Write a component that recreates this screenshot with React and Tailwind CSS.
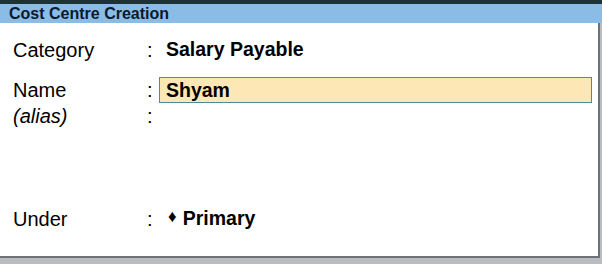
export default function App() {
  const rows = "flex items-center h-[26px]"
  return (
    <div className="w-[602px] h-[264px] bg-[#b9bdc1] font-['Liberation_Sans',Arial,sans-serif] text-black overflow-hidden">
      <div className="h-[4px] bg-[#1e3236]" />
      <div className="h-[19px] bg-[#8bbce5] pl-[9px] text-[16px] font-bold leading-[19px] text-[#0b1a2a]">
        Cost Centre Creation
      </div>
      <div className="w-[600px] h-[235px] bg-white border-r-2 border-b-2 border-[#6f7275] pl-[13px] pt-[14px] text-[20px]">
        <div className={rows}>
          <span className="w-[134px]">Category</span>
          <span className="w-[19px]">:</span>
          <span className="font-bold text-[19.5px]">Salary Payable</span>
        </div>
        <div className={`${rows} mt-[14px]`}>
          <span className="w-[134px]">Name</span>
          <span className="w-[12px]">:</span>
          <div className="w-[433px] h-[26px] bg-[#fde7b4] border border-[#4a8c99] pl-[6px] font-bold text-[19.5px] leading-[24px]">
            Shyam
          </div>
        </div>
        <div className={`${rows} h-[25px]`}>
          <span className="w-[134px] italic">(alias)</span>
          <span>:</span>
        </div>
        <div className={`${rows} mt-[77px]`}>
          <span className="w-[134px]">Under</span>
          <span className="w-[21px]">:</span>
          <span className="text-[17px] mr-[6px] leading-none -translate-y-[3px]">♦</span>
          <span className="font-bold text-[19.5px]">Primary</span>
        </div>
      </div>
    </div>
  )
}
